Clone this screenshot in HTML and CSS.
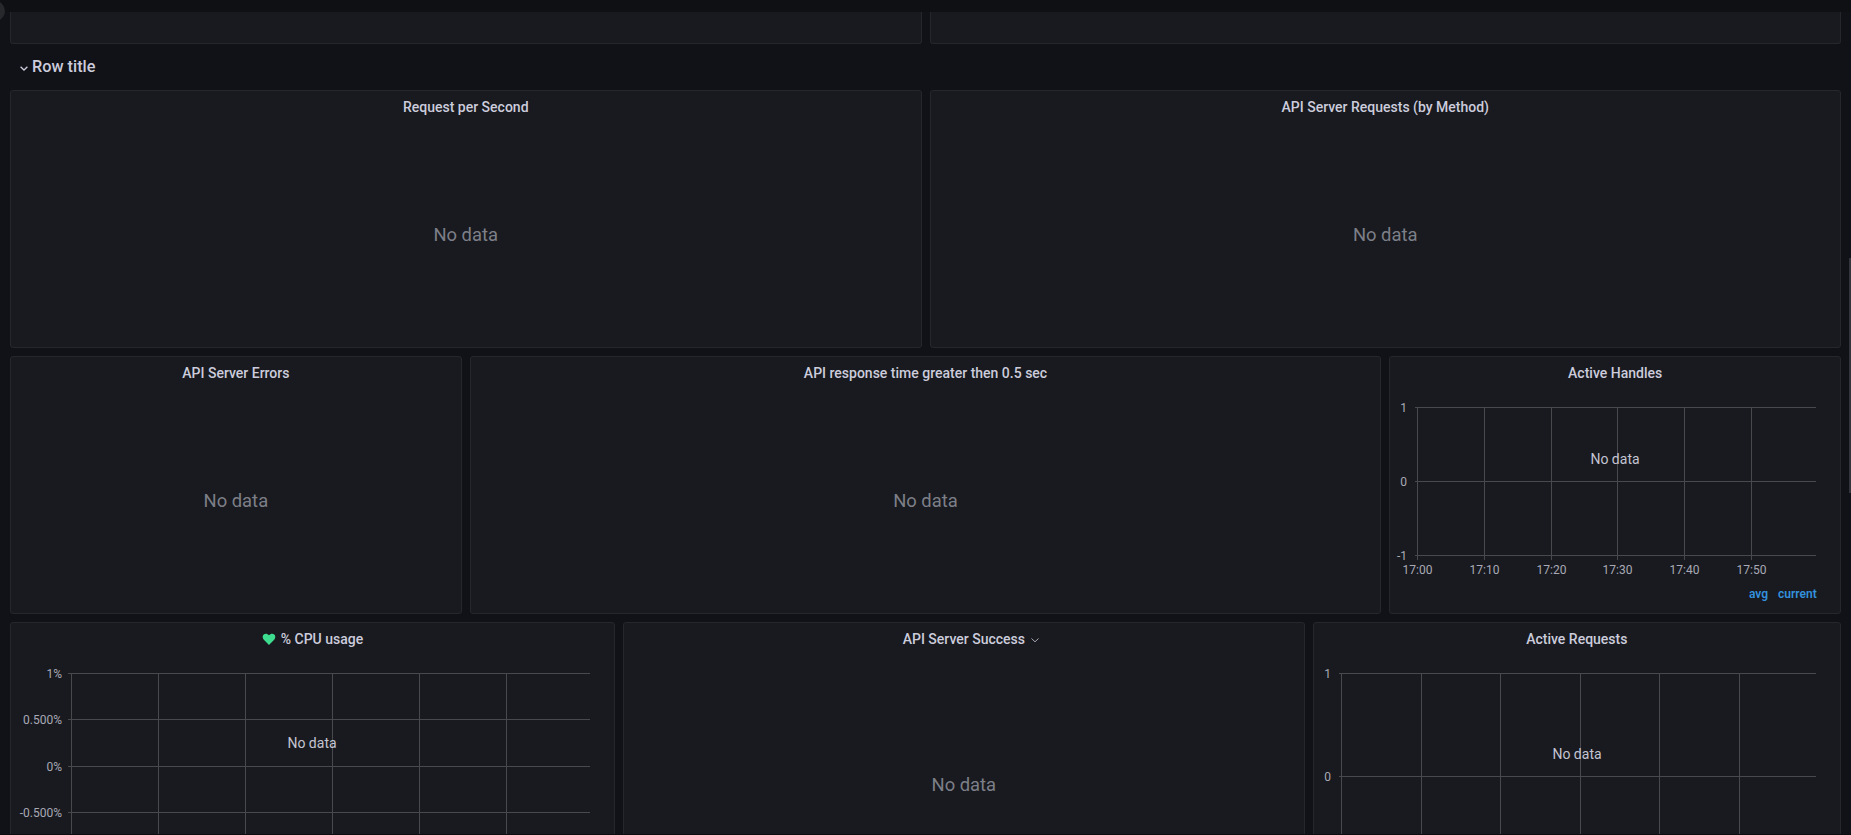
FILE: index.html
```html
<!DOCTYPE html>
<html lang="en">
<head>
    <meta charset="UTF-8">
    <meta name="viewport" content="width=device-width, initial-scale=1.0">
    <title>Dashboard</title>
    <link rel="stylesheet" href="styles.css">
</head>
<body>
    <div class="topbar"></div>
    <div class="menu-dot"></div>

    <main class="dashboard">
        <div class="panel panel-cut span-12"></div>
        <div class="panel panel-cut span-12"></div>

        <div class="row-title">
            <svg class="row-chevron" width="16" height="16" viewBox="0 0 16 16"><path d="M4.600 6.800 8 10l3.400-3.200" fill="none" stroke="#ccccdc" stroke-width="1.300"/></svg>
            <span>Row title</span>
        </div>

        <section class="panel span-12">
            <h2 class="panel-title">Request per Second</h2>
            <div class="no-data">No data</div>
        </section>
        <section class="panel span-12">
            <h2 class="panel-title">API Server Requests (by Method)</h2>
            <div class="no-data">No data</div>
        </section>

        <section class="panel span-6">
            <h2 class="panel-title">API Server Errors</h2>
            <div class="no-data">No data</div>
        </section>
        <section class="panel span-12">
            <h2 class="panel-title">API response time greater then 0.5 sec</h2>
            <div class="no-data">No data</div>
        </section>
        <section class="panel span-6">
            <h2 class="panel-title">Active Handles</h2>
            <svg class="chart" width="450" height="225">
                <g class="grid">
                    <path d="M25 19.500H426M25 93.500H426M25 167.500H426"/>
                    <path d="M27.500 19V172M94.500 19V172M161.500 19V172M227.500 19V172M294.500 19V172M361.500 19V172"/>
                </g>
                <g class="axis axis-y">
                    <text x="17" y="24">1</text>
                    <text x="17" y="98">0</text>
                    <text x="17" y="172">-1</text>
                </g>
                <g class="axis axis-x">
                    <text x="27.500" y="186">17:00</text>
                    <text x="94.500" y="186">17:10</text>
                    <text x="161.500" y="186">17:20</text>
                    <text x="227.500" y="186">17:30</text>
                    <text x="294.500" y="186">17:40</text>
                    <text x="361.500" y="186">17:50</text>
                </g>
                <text class="chart-empty" x="225" y="76">No data</text>
                <text class="legend" x="359" y="210">avg</text>
                <text class="legend" x="388" y="210">current</text>
            </svg>
        </section>

        <section class="panel span-8">
            <h2 class="panel-title">
                <svg class="heart" width="14" height="14" viewBox="0 0 14 14"><path d="M7 13 1.600 7.400C.2 5.900.4 3.400 2 2.300c1.600-1 3.600-.6 5 1 1.400-1.600 3.400-2 5-1 1.600 1.100 1.800 3.600.4 5.100Z" fill="#3ddc8f"/></svg>
                % CPU usage
            </h2>
            <svg class="chart" width="603" height="260">
                <g class="grid">
                    <path d="M57 19.500H579M57 65.500H579M57 112.500H579M57 158.500H579"/>
                    <path d="M60.500 19V260M147.500 19V260M234.500 19V260M321.500 19V260M408.500 19V260M495.500 19V260"/>
                </g>
                <g class="axis axis-y">
                    <text x="51" y="24">1%</text>
                    <text x="51" y="70">0.500%</text>
                    <text x="51" y="117">0%</text>
                    <text x="51" y="163">-0.500%</text>
                </g>
                <text class="chart-empty" x="301" y="94">No data</text>
            </svg>
        </section>
        <section class="panel span-9">
            <h2 class="panel-title">
                <span class="title-text">API Server Success
                    <svg class="title-chevron" width="10" height="10" viewBox="0 0 10 10"><path d="M1.500 3.500 5 6.800l3.500-3.300" fill="none" stroke="#a8a8b5" stroke-width="1"/></svg>
                </span>
            </h2>
            <div class="no-data">No data</div>
        </section>
        <section class="panel span-7">
            <h2 class="panel-title">Active Requests</h2>
            <svg class="chart" width="526" height="260">
                <g class="grid">
                    <path d="M25 19.500H502M25 122.500H502"/>
                    <path d="M27.500 19V260M107.500 19V260M186.500 19V260M266.500 19V260M345.500 19V260M425.500 19V260"/>
                </g>
                <g class="axis axis-y">
                    <text x="17" y="24">1</text>
                    <text x="17" y="127">0</text>
                </g>
                <text class="chart-empty" x="263" y="105">No data</text>
            </svg>
        </section>
    </main>

    <div class="scrollbar"></div>
    <div class="bottom-edge"></div>
</body>
</html>
```

FILE: styles.css
```css
:root {
    --fundo: #111217;
    --painel: #181a1f;
    --borda: #25272c;
    --texto: #ccccdc;
    --cinza: #7d7f88;
    --grade: #47494d;
}

* {
    font-family: Roboto, "Liberation Sans", sans-serif;
    padding: 0px;
    margin: 0px;
    box-sizing: border-box;
}

html,
body {
    background-color: var(--fundo);
    height: 100vh;
    overflow: hidden;
}

.topbar {
    height: 12px;
    background-color: #0f1014;
}

.menu-dot {
    position: absolute;
    left: -15px;
    top: 1px;
    width: 20px;
    height: 20px;
    border-radius: 50%;
    background-color: #26282c;
}

.bottom-edge {
    position: absolute;
    left: 0px;
    right: 0px;
    bottom: 0px;
    height: 1px;
    background-color: #0c0d10;
}

.dashboard {
    display: grid;
    grid-template-columns: repeat(24, 1fr);
    grid-template-rows: 32px 30px 258px 258px 294px;
    gap: 8px;
    padding: 0px 10px;
}

.span-6 { grid-column: span 6; }
.span-7 { grid-column: span 7; }
.span-8 { grid-column: span 8; }
.span-9 { grid-column: span 9; }
.span-12 { grid-column: span 12; }

.row-title {
    grid-column: span 24;
    display: flex;
    align-items: center;
    padding-left: 6px;
    padding-bottom: 2px;
    color: var(--texto);
    font-size: 16.3px;
    font-weight: 500;
}

.row-chevron {
    margin-top: 3px;
}

.panel {
    display: flex;
    flex-direction: column;
    background-color: var(--painel);
    border: 1px solid var(--borda);
    border-radius: 3px;
    overflow: hidden;
}

.panel-cut {
    border-top: none;
    border-radius: 0px 0px 3px 3px;
}

.panel-title {
    flex: none;
    display: flex;
    justify-content: center;
    align-items: center;
    gap: 5px;
    height: 31px;
    color: var(--texto);
    font-size: 14px;
    font-weight: 500;
}

.title-text {
    position: relative;
}

.title-chevron {
    position: absolute;
    left: 100%;
    top: 4px;
    margin-left: 5px;
}

.no-data {
    flex: 1;
    display: flex;
    justify-content: center;
    align-items: center;
    color: var(--cinza);
    font-size: 18.4px;
}

.chart {
    display: block;
}

.grid path {
    fill: none;
    stroke: var(--grade);
    stroke-width: 1;
}

.axis text {
    fill: #a9a9b6;
    font-size: 12px;
}

.axis-y text {
    text-anchor: end;
}

.axis-x text {
    text-anchor: middle;
}

.chart-empty {
    fill: #c4c4d2;
    font-size: 14px;
    text-anchor: middle;
}

.legend {
    fill: #3491dd;
    font-size: 12px;
    font-weight: 600;
}

.scrollbar {
    position: absolute;
    right: 0px;
    top: 258px;
    width: 2px;
    height: 235px;
    background-color: #33353a;
}
```
